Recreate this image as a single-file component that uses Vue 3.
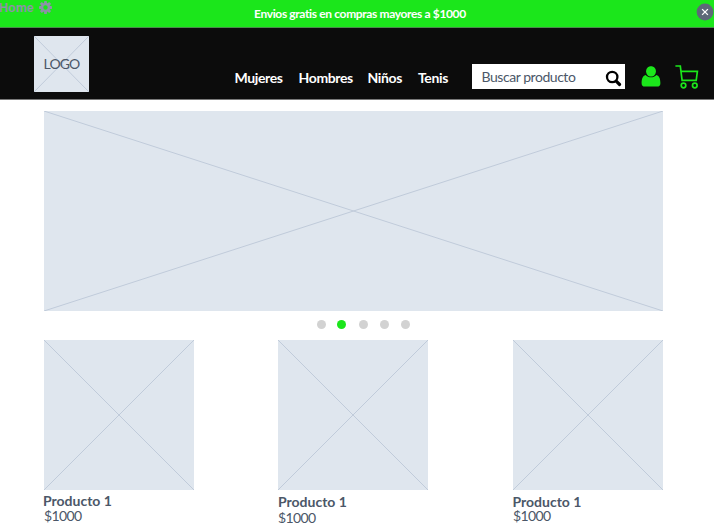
<script setup>
const links = [
  { label: 'Mujeres', width: 64 },
  { label: 'Hombres', width: 69 },
  { label: 'Niños', width: 50.5 },
  { label: 'Tenis', width: 40 },
]
const slides = [false, true, false, false, false]
const products = [
  { id: 1, name: 'Producto 1', price: '$1000' },
  { id: 2, name: 'Producto 1', price: '$1000' },
  { id: 3, name: 'Producto 1', price: '$1000' },
]
const teeth = [0, 45, 90, 135, 180, 225, 270, 315]
</script>

<template>
  <div class="page">
    <div class="promo">
      <div class="home">
        <span class="home-label">Home</span>
        <svg class="gear" viewBox="0 0 12 12">
          <rect v-for="a in teeth" :key="a" x="4.7" y="0" width="2.6" height="3" rx=".4" :transform="`rotate(${a} 6 6)`" />
          <circle class="gear-ring" cx="6" cy="6" r="3.2" />
        </svg>
      </div>
      <span class="promo-text">Envios gratis en compras mayores a $1000</span>
      <svg class="close" viewBox="0 0 18 18">
        <circle cx="9" cy="9" r="8.4" />
        <path d="M6.1 6.1 L11.9 11.9 M11.9 6.1 L6.1 11.9" />
      </svg>
    </div>

    <header class="header">
      <div class="logo">
        <svg class="cross" viewBox="0 0 100 100" preserveAspectRatio="none"><path d="M0 0 L100 100 M100 0 L0 100" /></svg>
        <span class="logo-text">LOGO</span>
      </div>
      <nav class="nav">
        <a v-for="l in links" :key="l.label" :style="{ width: l.width + 'px' }">{{ l.label }}</a>
      </nav>
      <div class="search">
        <span>Buscar producto</span>
        <svg viewBox="0 0 17 17">
          <circle cx="7.2" cy="7" r="5.2" />
          <path d="M11.2 11.2 L14.6 14.5" />
        </svg>
      </div>
      <svg class="user" viewBox="0 0 20 21">
        <path d="M10 0.3 C13 .3 14.9 2.5 14.9 5.3 C14.9 8.2 13 10.6 10 10.6 C7 10.6 5.1 8.2 5.1 5.3 C5.1 2.5 7 .3 10 .3 Z" />
        <path d="M4.6 9 C6 10.6 8 11.3 10 11.3 C12 11.3 14 10.6 15.4 9 C18.5 9.8 19.4 13.3 19.4 17.2 C19.4 19.4 18.2 20.6 16.2 20.6 H3.8 C1.8 20.6 .6 19.4 .6 17.2 C.6 13.3 1.5 9.8 4.6 9 Z" />
      </svg>
      <svg class="cart" viewBox="0 0 24 24">
        <path d="M0.4 1 H5.3 L7.1 15.3 H21.2 L22.4 6.3 H6" />
        <circle cx="8.5" cy="20.5" r="2.3" />
        <circle cx="19.8" cy="20.5" r="2.3" />
      </svg>
    </header>

    <main>
      <div class="hero">
        <svg class="cross" viewBox="0 0 100 100" preserveAspectRatio="none"><path d="M0 0 L100 100 M100 0 L0 100" /></svg>
      </div>
      <div class="dots">
        <i v-for="(active, n) in slides" :key="n" :class="{ active }"></i>
      </div>
      <div class="products">
        <article v-for="p in products" :key="p.id" class="product">
          <div class="thumb">
            <svg class="cross" viewBox="0 0 100 100" preserveAspectRatio="none"><path d="M0 0 L100 100 M100 0 L0 100" /></svg>
          </div>
          <h3>{{ p.name }}</h3>
          <p>{{ p.price }}</p>
        </article>
      </div>
    </main>
  </div>
</template>

<style>
body { margin: 0; background: #fff; overflow: hidden; }
</style>

<style scoped>
.page {
  width: 714px;
  height: 523px;
  overflow: hidden;
  font-family: Lato, "Liberation Sans", sans-serif;
  color: #4b5768;
}
.promo {
  position: relative;
  box-sizing: border-box;
  height: 28px;
  background: #1be61b;
  border-bottom: 1px solid #4b8a4b;
  display: flex;
  justify-content: flex-end;
}
.home {
  position: absolute;
  left: -1px;
  top: 1px;
  display: flex;
  align-items: center;
  gap: 6px;
  height: 14px;
  color: #8c93a6;
}
.home-label { font: bold 12.5px/14px "Liberation Sans", Arial, sans-serif; width: 34px; }
.gear { width: 13px; height: 13px; margin-top: -1px; fill: currentColor; }
.gear-ring { fill: none; stroke: currentColor; stroke-width: 2.3; }
.gear rect { fill: currentColor; }
.promo-text {
  position: absolute;
  left: 254px;
  top: 6px;
  font-size: 12px;
  line-height: 16px;
  font-weight: 700;
  letter-spacing: -0.36px;
  white-space: nowrap;
  color: #fff;
}
.close { width: 18px; height: 18px; margin: 3px 0 0; }
.close circle { fill: #5d6878; }
.close path { stroke: #fff; stroke-width: 1.3; }

.header {
  box-sizing: border-box;
  height: 72px;
  background: #0c0c0c;
  border-bottom: 1px solid #797979;
  display: flex;
  align-items: flex-start;
  padding: 8px 0 0 34px;
}
.logo {
  width: 55px;
  height: 56px;
  background: #dfe6ee;
  display: grid;
  place-items: center;
}
.logo > * { grid-area: 1 / 1; }
.logo-text { font-size: 14px; line-height: 18px; letter-spacing: -0.9px; }
.cross { display: block; width: 100%; height: 100%; }
.cross path { stroke: #c0cbda; stroke-width: 1; vector-effect: non-scaling-stroke; }
.nav {
  display: flex;
  margin: 33px 0 0 145.5px;
  width: 237px;
  color: #fff;
  font-size: 14px;
  line-height: 18px;
  font-weight: 700;
  letter-spacing: -0.36px;
}
.nav a { flex: none; }
.search {
  box-sizing: border-box;
  width: 153px;
  height: 25px;
  margin-top: 28px;
  padding: 0 3px 0 10px;
  background: #fff;
  display: flex;
  align-items: center;
  justify-content: space-between;
  font-size: 14px;
  letter-spacing: -0.45px;
  white-space: nowrap;
}
.search svg { width: 17px; height: 17px; margin-top: 3px; fill: none; stroke: #000; stroke-width: 2.3; }
.search path { stroke-width: 3.2; stroke-linecap: round; }
.user { width: 20px; height: 21px; margin: 30px 0 0 16px; fill: #1be61b; }
.cart { width: 24px; height: 24px; margin: 29px 0 0 14px; fill: none; stroke: #1be61b; stroke-width: 1.7; }

main { padding: 11px 51px 0 44px; }
.hero { height: 200px; background: #dfe6ee; }
.dots { display: flex; height: 29px; padding-left: 272.6px; align-items: center; gap: 12px; box-sizing: border-box; padding-bottom: 2px; }
.dots i { width: 9.3px; height: 9.3px; border-radius: 50%; background: #d2d2d2; }
.dots .active { background: #1be61b; margin: 0 .2px 0 -.8px; }
.products { display: flex; gap: 84px; }
.product { width: 150px; }
.product:nth-child(3) { margin-left: 1px; }
.thumb { height: 150px; background: #dfe6ee; }
h3 { margin: 3px 0 0 -1px; font-size: 14px; line-height: 15px; font-weight: 700; }
.product p { margin: 0; font-size: 14px; line-height: 15px; letter-spacing: -0.6px; }
.product:nth-child(n + 2) h3 { margin: 4px 0 0; }
.product:nth-child(2) p { margin-top: 1px; }
.product:nth-child(3) h3 { margin-left: -.5px; }
.product:nth-child(3) p { margin-top: -1px; }
</style>
